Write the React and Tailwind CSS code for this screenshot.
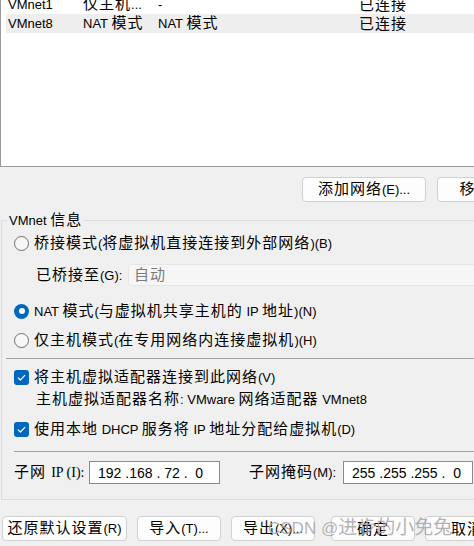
import React from 'react';

// wrap latin runs so they render a bit smaller than the CJK text, like the Windows dialog
const T = ({ children }) => {
  const parts = String(children).split(/([\x20-\x7E]+)/);
  return (
    <span>
      {parts.map((p, i) =>
        /[\x20-\x7E]/.test(p) ? (
          <span key={i} className="text-[13px] tracking-normal">
            {p}
          </span>
        ) : (
          <React.Fragment key={i}>{p}</React.Fragment>
        )
      )}
    </span>
  );
};

const Row = ({ cols, selected }) => (
  <div
    className={`h-[19px] flex items-center ${
      selected ? 'ml-[5px] pl-[2px] bg-[#eeeeee]' : 'pl-[7px]'
    }`}
  >
    <div className="w-[75px] shrink-0"><T>{cols[0]}</T></div>
    <div className="w-[75px] shrink-0"><T>{cols[1]}</T></div>
    <div className="w-[201px] shrink-0"><T>{cols[2]}</T></div>
    <div className="shrink-0"><T>{cols[3]}</T></div>
  </div>
);

const Button = ({ label, className = '' }) => (
  <div
    className={`h-[25px] shrink-0 flex items-center justify-center border border-[#d0d0d0] rounded-[4px] bg-[#fdfdfd] ${className}`}
  >
    <T>{label}</T>
  </div>
);

const Radio = ({ checked }) =>
  checked ? (
    <div className="w-[15px] h-[15px] shrink-0 rounded-full bg-[#0067c0] flex items-center justify-center">
      <div className="w-[6px] h-[6px] rounded-full bg-white" />
    </div>
  ) : (
    <div className="w-[15px] h-[15px] shrink-0 rounded-full border border-[#6f6f6f] bg-[#f7f7f7]" />
  );

const Check = () => (
  <div className="w-[15px] h-[15px] shrink-0 rounded-[3px] bg-[#0067c0] flex items-center justify-center">
    <svg width="11" height="11" viewBox="0 0 11 11">
      <path d="M2.2 5.8 L4.4 8 L8.8 3.4" fill="none" stroke="white" strokeWidth="1.2" strokeLinecap="round" strokeLinejoin="round" />
    </svg>
  </div>
);

export default function App() {
  return (
    <div className="relative w-[474px] h-[546px] overflow-hidden bg-[#f0f0f0] text-black text-[15px] leading-[20px] tracking-[1px] font-['Liberation_Sans','Noto_Sans_CJK_SC',sans-serif]">
      {/* network list */}
      <div className="h-[167px] w-[480px] bg-white border-l border-b border-[#9a9a9a] overflow-hidden">
        <div className="-mt-[5px]">
          <Row cols={['VMnet1', '仅主机...', '-', '已连接']} />
          <Row selected cols={['VMnet8', 'NAT 模式', 'NAT 模式', '已连接']} />
        </div>
      </div>

      {/* add / remove */}
      <div className="mt-[10px] flex pl-[302px] gap-[11px]">
        <Button label="添加网络(E)..." className="w-[124px]" />
        <Button label="移除(O)" className="w-[96px]" />
      </div>

      {/* VMnet info group */}
      <div className="relative mt-[18px] ml-[1px] w-[480px] border-l border-t border-b border-[#dcdcdc]">
        <div className="absolute left-[5px] -top-[11px] px-[2px] bg-[#f0f0f0]">
          <T>VMnet 信息</T>
        </div>

        <div className="pt-[12px] pb-[15px]">
          <div className="h-[20px] pl-[12px] flex items-center gap-[5px]">
            <Radio />
            <T>桥接模式(将虚拟机直接连接到外部网络)(B)</T>
          </div>

          <div className="mt-[11px] h-[22px] pl-[34px] flex items-center">
            <div className="w-[92px] shrink-0"><T>已桥接至(G):</T></div>
            <div className="flex-1 h-[22px] flex items-center pl-[5px] bg-[#f6f6f6] border border-[#e6e6e6] rounded-[3px] text-[#7a7a7a]">
              自动
            </div>
          </div>

          <div className="mt-[15px] h-[20px] pl-[12px] flex items-center gap-[5px]">
            <Radio checked />
            <T>NAT 模式(与虚拟机共享主机的 IP 地址)(N)</T>
          </div>

          <div className="mt-[9px] h-[20px] pl-[12px] flex items-center gap-[5px]">
            <Radio />
            <T>仅主机模式(在专用网络内连接虚拟机)(H)</T>
          </div>

          <div className="mt-[8px] ml-[4px] h-px bg-[#a0a0a0]" />

          <div className="mt-[8px] h-[20px] pl-[12px] flex items-center gap-[5px]">
            <Check />
            <T>将主机虚拟适配器连接到此网络(V)</T>
          </div>

          <div className="mt-[2px] h-[20px] pl-[34px] flex items-center">
            <T>主机虚拟适配器名称: VMware 网络适配器 VMnet8</T>
          </div>

          <div className="mt-[10px] h-[20px] pl-[12px] flex items-center gap-[5px]">
            <Check />
            <T>使用本地 DHCP 服务将 IP 地址分配给虚拟机(D)</T>
          </div>

          <div className="mt-[12px] ml-[12px] h-px bg-[#a0a0a0]" />

          <div className="mt-[9px] h-[23px] pl-[12px] flex items-center">
            <div className="w-[75px] shrink-0">
              子网 <span className="text-[14px] tracking-normal font-['Liberation_Serif',serif]">IP (I):</span>
            </div>
            <div className="w-[131px] h-[23px] shrink-0 flex items-center pl-[8px] bg-white border border-[#8a8a8a] text-[14px] tracking-normal whitespace-pre">
              192 .168 . 72 .  0
            </div>
            <div className="ml-[29px] w-[94px] shrink-0"><T>子网掩码(M):</T></div>
            <div className="w-[130px] h-[23px] shrink-0 flex items-center pl-[8px] bg-white border border-[#8a8a8a] text-[14px] tracking-normal whitespace-pre">
              255 .255 .255 .  0
            </div>
          </div>
        </div>
      </div>

      {/* bottom buttons */}
      <div className="mt-[16px] flex pl-[2px]">
        <Button label="还原默认设置(R)" className="w-[125px]" />
        <Button label="导入(T)..." className="w-[84px] ml-[10px]" />
        <Button label="导出(X)..." className="w-[84px] ml-[10px]" />
        <Button label="确定" className="w-[84px] ml-[16px]" />
        <Button label="取消" className="w-[84px] ml-[10px]" />
      </div>

      {/* watermark */}
      <div className="absolute left-[268px] top-[516px] leading-[24px] tracking-normal text-[#a6a6a6]/85 pointer-events-none whitespace-nowrap">
        <span className="text-[17px]">CSDN @</span>
        <span className="text-[19px]">进步的小免兔</span>
      </div>
    </div>
  );
}
